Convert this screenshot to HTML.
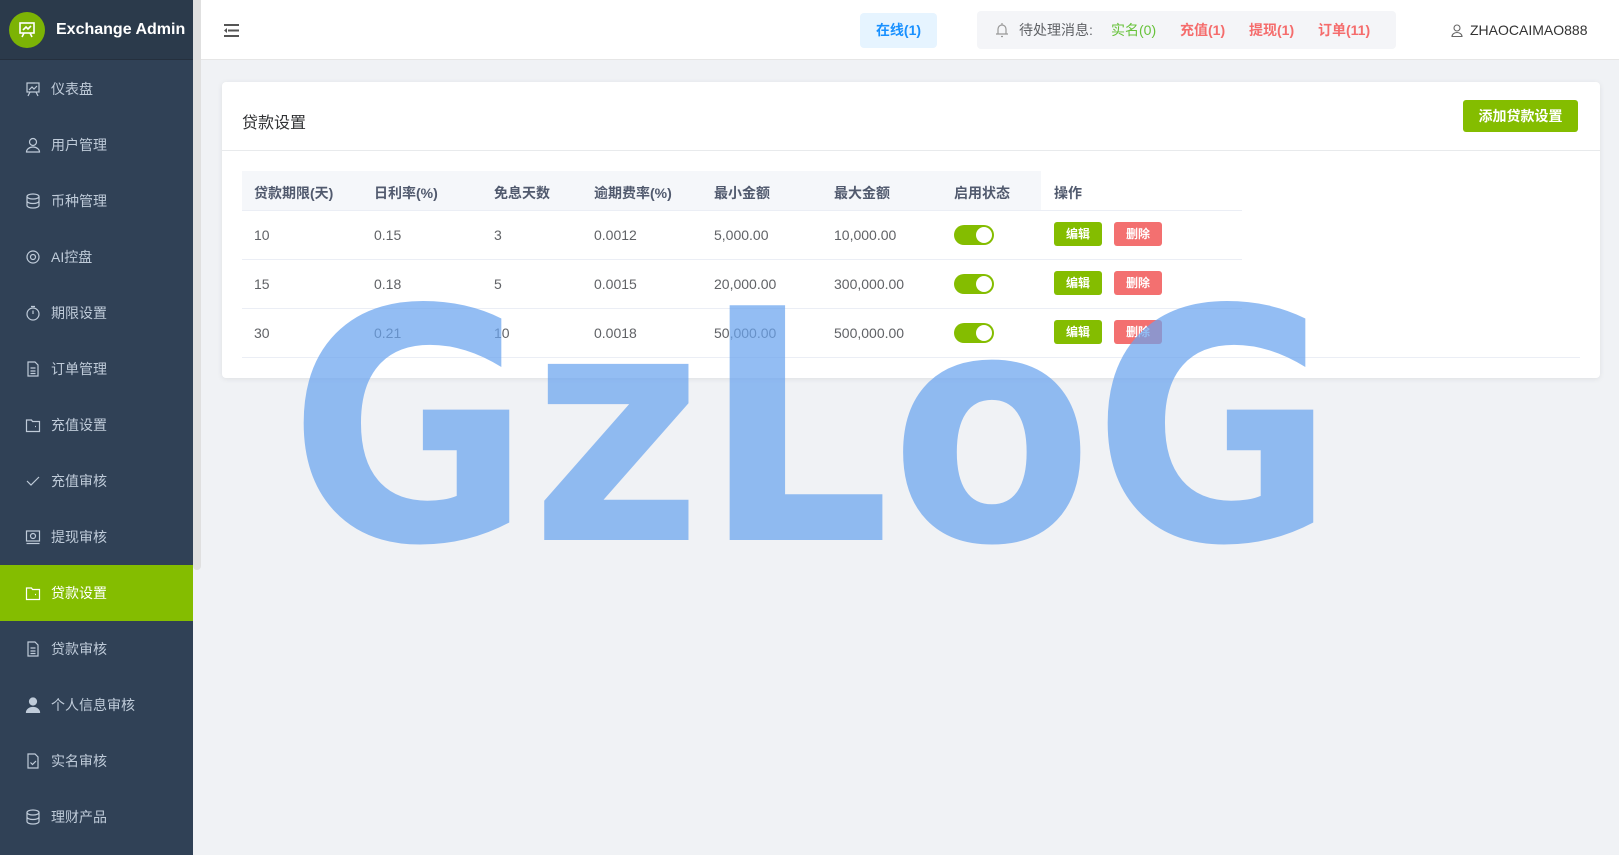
<!DOCTYPE html>
<html><head><meta charset="utf-8"><style>
*{margin:0;padding:0;box-sizing:border-box}
body{width:1619px;height:855px;overflow:hidden;background:#f0f2f5;font-family:"Liberation Sans","Noto Sans CJK SC",sans-serif;position:relative}
.side{position:absolute;left:0;top:0;width:193px;height:855px;background:#304156}
.logo{height:60px;background:#2b3a4b;display:flex;align-items:center;border-bottom:1px solid #25303e;white-space:nowrap}
.logo .c{width:36px;height:36px;border-radius:50%;background:#7cb305;margin-left:9px;display:flex;align-items:center;justify-content:center;flex:none}
.logo span{color:#fff;font-weight:bold;font-size:16px;margin-left:11px}
.mi{position:absolute;left:0;width:193px;height:56px;display:flex;align-items:center;color:#bfcbd9;font-size:14px}
.mi svg{margin-left:25px;margin-right:10px}
.mi.act{background:#84bd00;color:#fff}
.sb{position:absolute;left:193px;top:0;width:8px;height:570px;background:#e0e0e0;border-radius:0 0 4px 4px}
.hdr{position:absolute;left:201px;top:0;right:0;height:60px;background:#fff;border-bottom:1px solid #e6e6e6}
.card{position:absolute;left:222px;top:82px;width:1378px;height:296px;background:#fff;border-radius:4px;box-shadow:0 1px 6px rgba(0,0,0,.08)}
.th,.td{position:absolute;font-size:14px;color:#606266}
.th{font-weight:bold;color:#515a6e;top:183px}
.sw{position:absolute;width:40px;height:20px;border-radius:10px;background:#84bd00}
.sw:after{content:"";position:absolute;right:2px;top:2px;width:16px;height:16px;border-radius:50%;background:#fff}
.b{position:absolute;width:48px;height:24px;border-radius:3px;color:#fff;font-size:12px;font-weight:bold;text-align:center;line-height:24px}
.line{position:absolute;left:242px;height:1px;background:#ebeef5}
</style></head><body>
<div class="side">
<div class="logo"><div class="c"><svg width="20" height="20" viewBox="0 0 20 20" fill="none" stroke="#fff" stroke-width="1.6"><rect x="3" y="3" width="14" height="10"/><path d="M6 10l3-3 2 2 3-3M7 13l-2 4M13 13l2 4"/></svg></div><span>Exchange Admin</span></div>
</div>
<div class="sb"></div>
<div id="menu"></div>
<div class="hdr">
<svg style="position:absolute;left:23px;top:24px" width="15" height="13" viewBox="0 0 15 13" fill="#555"><rect x="0" y="0" width="15" height="2"/><rect x="4" y="5.5" width="11" height="2"/><rect x="0" y="11" width="15" height="2"/><path d="M0 6.5l3-2.5v5z"/></svg>
<div style="position:absolute;left:659px;top:13px;width:77px;height:35px;background:#e6f4ff;border-radius:4px;color:#1890ff;font-size:14px;font-weight:bold;text-align:center;line-height:35px">在线(1)</div>
<div style="position:absolute;left:776px;top:11px;width:419px;height:38px;background:#f4f5f8;border-radius:4px;font-size:14px;line-height:38px;white-space:nowrap">
<svg style="position:absolute;left:18px;top:11px" width="14" height="16" viewBox="0 0 14 16" fill="none" stroke="#999" stroke-width="1.2"><path d="M3 12V7a4 4 0 018 0v5M1 12h12M6 14.5h2M7 1v2"/></svg>
<span style="position:absolute;left:42px;color:#606266">待处理消息:</span>
<span style="position:absolute;left:134px;color:#67c23a">实名(0)</span>
<span style="position:absolute;left:203px;color:#f56c6c;font-weight:bold">充值(1)</span>
<span style="position:absolute;left:272px;color:#f56c6c;font-weight:bold">提现(1)</span>
<span style="position:absolute;left:341px;color:#f56c6c;font-weight:bold">订单(11)</span>
</div>
<svg style="position:absolute;left:1250px;top:24px" width="12" height="13" viewBox="0 0 12 13" fill="none" stroke="#666" stroke-width="1.1"><circle cx="6" cy="4" r="3"/><path d="M1 12.5a5 4 0 0110 0z"/></svg>
<span style="position:absolute;left:1269px;top:22px;font-size:14px;color:#333">ZHAOCAIMAO888</span>
</div>
<div class="card">
<div style="position:absolute;left:20px;top:27px;font-size:16px;color:#303133">贷款设置</div>
<div style="position:absolute;left:1241px;top:18px;width:115px;height:32px;background:#84bd00;border-radius:3px;color:#fff;font-size:14px;font-weight:bold;text-align:center;line-height:32px">添加贷款设置</div>
<div style="position:absolute;left:0;right:0;top:68px;height:1px;background:#e8eaec"></div>
</div>
<div style="position:absolute;left:242px;top:171px;width:799px;height:39px;background:#f5f7fa"></div>
<div class="line" style="top:210px;width:1000px"></div>
<div class="line" style="top:259px;width:1000px"></div>
<div class="line" style="top:308px;width:1000px"></div>
<div class="line" style="top:357px;width:1338px"></div>
<div class="th" style="left:254px">贷款期限(天)</div><div class="th" style="left:374px">日利率(%)</div><div class="th" style="left:494px">免息天数</div><div class="th" style="left:594px">逾期费率(%)</div><div class="th" style="left:714px">最小金额</div><div class="th" style="left:834px">最大金额</div><div class="th" style="left:954px">启用状态</div><div class="th" style="left:1054px">操作</div>
<div id="rows"></div>
<svg style="position:absolute;left:0;top:0" width="1619" height="855"><text x="289" y="540" font-family="DejaVu Sans" font-weight="bold" font-size="322" textLength="1046" lengthAdjust="spacingAndGlyphs" fill="#6aa4ee" fill-opacity="0.72">GzLoG</text></svg>
<script>
var items=[["仪表盘","dash"],["用户管理","user"],["币种管理","db"],["AI控盘","gear"],["期限设置","timer"],["订单管理","doc"],["充值设置","wallet"],["充值审核","check"],["提现审核","photo"],["贷款设置","wallet"],["贷款审核","doc"],["个人信息审核","person"],["实名审核","doccheck"],["理财产品","db"]];
var ic={dash:'<rect x="2" y="2" width="12" height="9"/><path d="M4 9l3-3 2 2 3-3M5 11l-2 4M11 11l2 4"/>',user:'<circle cx="8" cy="5" r="3.5"/><path d="M1.5 15a6.5 5 0 0113 0z"/>',db:'<ellipse cx="8" cy="3.5" rx="6" ry="2.5"/><path d="M2 3.5v9c0 1.4 2.7 2.5 6 2.5s6-1.1 6-2.5v-9M2 8c0 1.4 2.7 2.5 6 2.5s6-1.1 6-2.5"/>',gear:'<circle cx="8" cy="8" r="2.5"/><circle cx="8" cy="8" r="6"/>',timer:'<circle cx="8" cy="9" r="6"/><path d="M8 9V5.5M6 1.5h4"/>',doc:'<path d="M3 1h7l3 3v11H3zM5.5 7h5M5.5 10h5M5.5 12.5h5"/>',wallet:'<path d="M1.5 3h5l1 1.5h7v10h-13zM10 9.5h1"/>',check:'<path d="M2 8l4 4 8-8"/>',photo:'<rect x="1.5" y="2" width="13" height="10"/><circle cx="8" cy="7" r="2.5"/><path d="M1.5 14.5h13"/>',person:'<circle cx="8" cy="4.5" r="3.5" fill="#bfcbd9"/><path d="M1.5 15.5a6.5 5 0 0113 0z" fill="#bfcbd9"/>',doccheck:'<path d="M3 1h7l3 3v11H3zM5.5 9.5l2 2 3.5-3.5"/>'};
var h='';items.forEach(function(it,i){var a=i==9;h+='<div class="mi'+(a?' act':'')+'" style="top:'+(61+i*56)+'px"><svg width="16" height="16" viewBox="0 0 16 16" fill="none" stroke="'+(a?'#fff':'#bfcbd9')+'" stroke-width="1.2">'+ic[it[1]]+'</svg>'+it[0]+'</div>';});
document.getElementById('menu').innerHTML=h;
var rows=[["10","0.15","3","0.0012","5,000.00","10,000.00"],["15","0.18","5","0.0015","20,000.00","300,000.00"],["30","0.21","10","0.0018","50,000.00","500,000.00"]];
var xs=[254,374,494,594,714,834];var r='';
rows.forEach(function(row,i){var y=210+i*49;row.forEach(function(v,j){r+='<div class="td" style="left:'+xs[j]+'px;top:'+(y+17)+'px">'+v+'</div>';});
r+='<div class="sw" style="left:954px;top:'+(y+15)+'px"></div><div class="b" style="left:1054px;top:'+(y+12)+'px;background:#84bd00">编辑</div><div class="b" style="left:1114px;top:'+(y+12)+'px;background:#f37070">删除</div>';});
document.getElementById('rows').innerHTML=r;
</script>
</body></html>
